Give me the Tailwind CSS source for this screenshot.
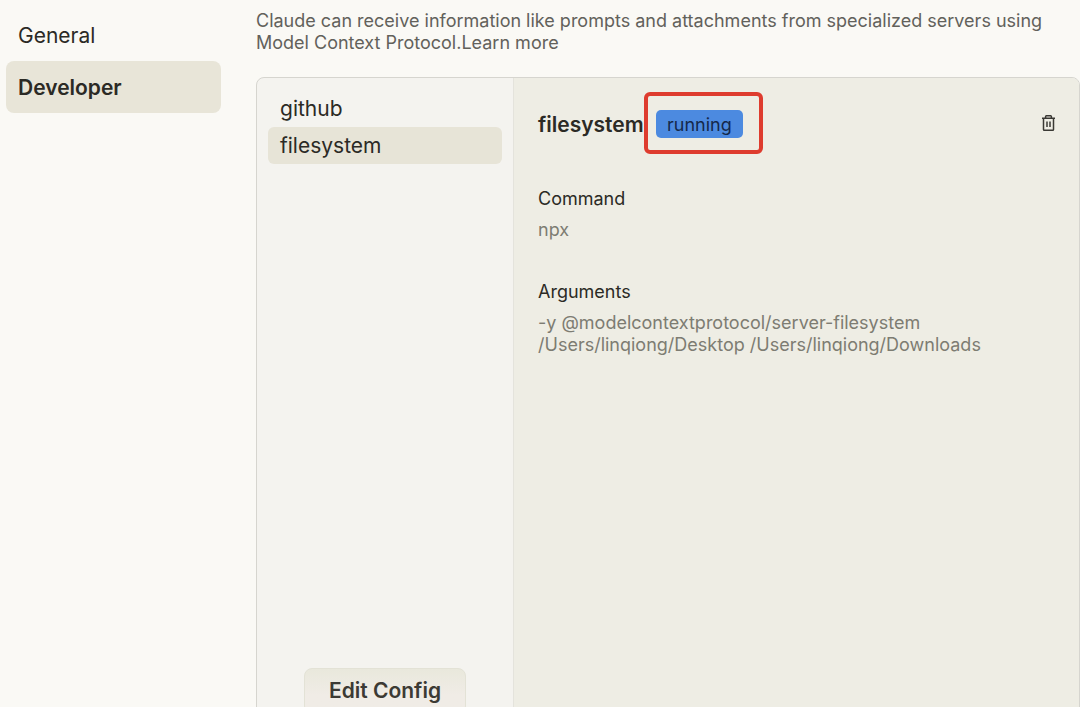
<!DOCTYPE html>
<html lang="en">
<head>
<meta charset="utf-8">
<meta name="viewport" content="width=device-width, initial-scale=1">
<title>Developer settings</title>
<script src="https://cdn.jsdelivr.net/npm/@tailwindcss/browser@4"></script>
</head>
<body class="flex h-screen overflow-hidden bg-[#faf9f5] font-['Inter',sans-serif] text-[#2b2a25]">
  <nav class="flex w-[221px] shrink-0 flex-col pt-3 pl-[6px] text-[21px] leading-6" aria-label="Settings">
    <a href="#general" class="rounded-lg px-3 pt-3 pb-[13px]">General</a>
    <a href="#developer" class="rounded-lg bg-[#e8e5d8] px-3 pt-[15px] pb-[13px] font-semibold" aria-current="page">Developer</a>
  </nav>
  <main class="ml-[35px] flex min-w-0 flex-1 flex-col pt-[10px]">
    <p class="pr-6 text-[18px] leading-[22px] text-[#62615b]">Claude can receive information like prompts and attachments from specialized servers using Model Context Protocol.<a href="#learn">Learn more</a></p>
    <section class="mt-[23px] -mb-6 flex flex-1 overflow-hidden rounded-lg border border-[#d6d5cf] bg-[#f4f3ef]">
      <div class="flex w-[257px] shrink-0 flex-col border-r border-[#e4e3dc] px-[11px] pt-3 pb-4">
        <div class="flex flex-col text-[21px] leading-6">
          <button type="button" class="rounded-md px-3 pt-[7px] pb-[6px] text-left">github</button>
          <button type="button" class="rounded-md bg-[#e7e4d7] px-3 pt-[7px] pb-[6px] text-left">filesystem</button>
        </div>
        <button type="button" class="mt-auto self-center rounded-lg border border-[#e3e2d6] bg-linear-to-b from-[#e9e8dc] to-[#f0ece6] to-60% px-6 py-[10px] text-[21px] leading-6 font-semibold text-[#3c3a34]">Edit Config</button>
      </div>
      <div class="min-w-0 flex-1 bg-[#eeede4] px-6">
        <header class="flex items-center pt-[14px]">
          <h2 class="w-[106px] pt-[3px] text-[21px] leading-6 font-semibold whitespace-nowrap">filesystem</h2>
          <div class="rounded-md border-4 border-[#de3c2e] pt-[14px] pr-4 pb-3 pl-2">
            <span class="block rounded-[5px] bg-[#4c8ae0] px-[11px] pt-1 pb-[2px] text-[18px] leading-[22px] text-[#14284a]">running</span>
          </div>
          <button type="button" class="ml-auto" aria-label="Delete server">
            <svg class="h-4 w-[13px]" viewBox="0 0 13 16" fill="none" stroke="#3a3934" stroke-width="1.5"><path d="M0 3.2H13M3.6 3.2V1.6Q3.6 0.8 4.4 0.8H8.6Q9.4 0.8 9.4 1.6V3.2M1.5 3.2V14.4Q1.5 15.2 2.3 15.2H10.7Q11.5 15.2 11.5 14.4V3.2M5 6.5V12M8 6.5V12"/></svg>
          </button>
        </header>
        <dl class="text-[18px] leading-[22px]">
          <dt class="mt-[34px]">Command</dt>
          <dd class="mt-[9px] text-[#7d7c72]">npx</dd>
          <dt class="mt-10">Arguments</dt>
          <dd class="mt-[9px] text-[#7d7c72]">-y @modelcontextprotocol/server-filesystem<br>/Users/linqiong/Desktop /Users/linqiong/Downloads</dd>
        </dl>
      </div>
    </section>
  </main>
</body>
</html>
